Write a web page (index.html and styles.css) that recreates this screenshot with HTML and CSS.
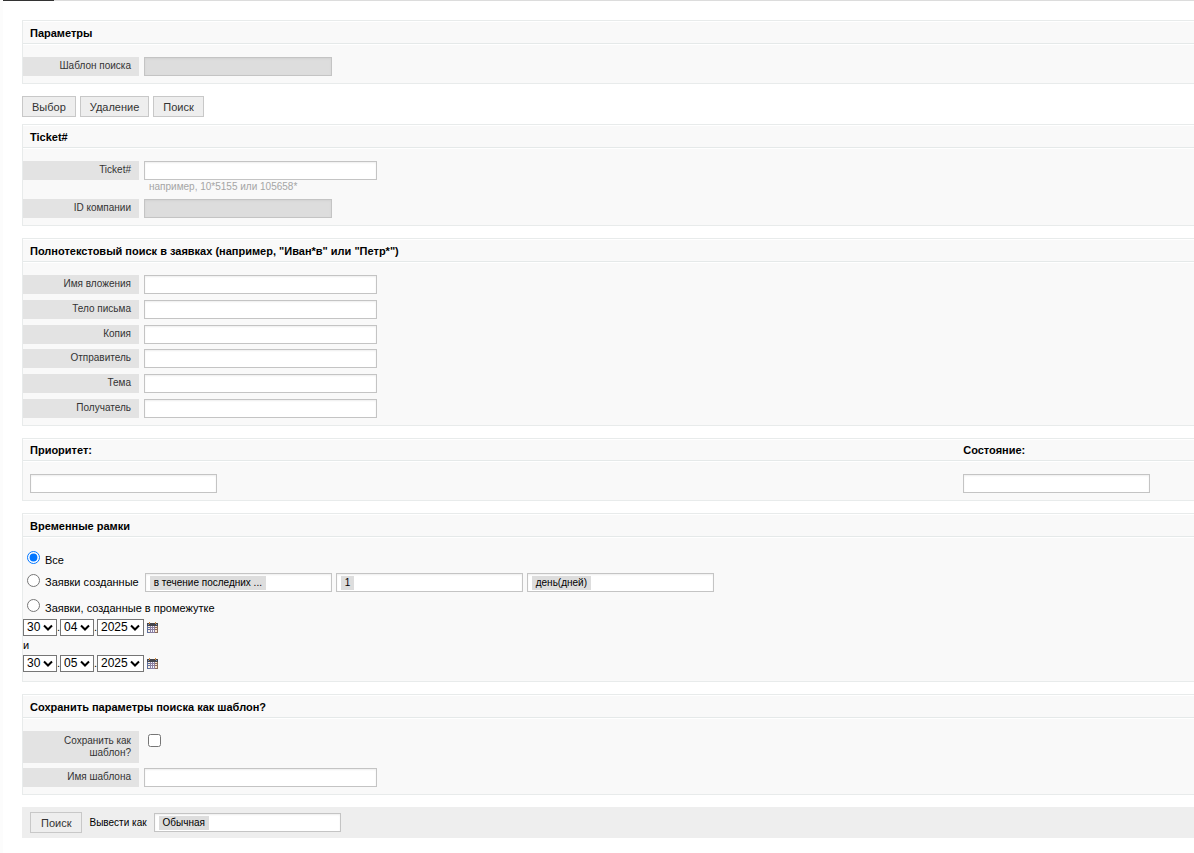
FILE: index.html
```html
<!DOCTYPE html>
<html lang="ru">
<head>
<meta charset="utf-8">
<title>Поиск</title>
<link rel="stylesheet" href="styles.css">
</head>
<body>
<svg class="defs" aria-hidden="true">
  <symbol id="calendar" viewBox="0 0 11 11">
    <rect x="0" y="1" width="11" height="10" fill="#5f6f9c"/>
    <rect x="3" y="4" width="5" height="7" fill="#8c80a0"/>
    <rect x="8" y="4" width="3" height="7" fill="#8a6a58"/>
    <rect x="0" y="1" width="11" height="3" fill="#45454c"/>
    <path d="M2 0h1v2h-1zM8 0h1v2h-1z" fill="#d08a40"/>
    <path d="M1 2h1v1h-1zM9 2h1v1h-1z" fill="#7898c8"/>
    <path d="M1 4h2v1h-2zM1 6h2v1h-2zM1 8h2v2h-2z" fill="#fbf1e2"/>
    <path d="M4 4h1v1h-1zM6 4h1v1h-1zM4 6h1v1h-1zM6 6h1v1h-1zM4 8h1v2h-1zM6 8h1v2h-1z" fill="#f4f6ff"/>
    <path d="M8 4h2v1h-2zM8 6h2v1h-2zM8 8h2v2h-2z" fill="#fbe6cf"/>
  </symbol>
</svg>
<div class="tabline"><div class="tab-active"></div></div>
<form class="page">
  <section class="panel">
    <h2>Параметры</h2>
    <div class="rows">
      <label for="profile">Шаблон поиска</label>
      <input id="profile" class="field short" type="text" disabled>
    </div>
  </section>

  <div class="actions">
    <button type="button">Выбор</button>
    <button type="button">Удаление</button>
    <button type="button">Поиск</button>
  </div>

  <section class="panel">
    <h2>Ticket#</h2>
    <div class="rows">
      <label for="ticket">Ticket#</label>
      <div class="cell">
        <input id="ticket" class="field" type="text">
        <p class="hint">например, 10*5155 или 105658*</p>
      </div>
      <label for="company">ID компании</label>
      <input id="company" class="field short" type="text" disabled>
    </div>
  </section>

  <section class="panel">
    <h2>Полнотекстовый поиск в заявках (например, "Иван*в" или "Петр*")</h2>
    <div class="rows spread">
      <label for="attachment">Имя вложения</label>
      <input id="attachment" class="field" type="text">
      <label for="body">Тело письма</label>
      <input id="body" class="field" type="text">
      <label for="cc">Копия</label>
      <input id="cc" class="field" type="text">
      <label for="from">Отправитель</label>
      <input id="from" class="field" type="text">
      <label for="subject">Тема</label>
      <input id="subject" class="field" type="text">
      <label for="to">Получатель</label>
      <input id="to" class="field" type="text">
    </div>
  </section>

  <section class="panel">
    <div class="head columns">
      <h2><label for="priority">Приоритет:</label></h2>
      <h2><label for="state">Состояние:</label></h2>
    </div>
    <div class="body columns">
      <input id="priority" class="field token-width" type="text">
      <input id="state" class="field token-width" type="text">
    </div>
  </section>

  <section class="panel">
    <h2>Временные рамки</h2>
    <div class="times">
      <div class="choice">
        <input id="all" type="radio" name="time" checked>
        <label for="all">Все</label>
      </div>
      <div class="choice with-fields">
        <input id="created" type="radio" name="time">
        <label for="created">Заявки созданные</label>
        <div class="tokens">
          <div class="token-field"><span class="token">в течение последних ...</span><input type="text" aria-label="Период"></div>
          <div class="token-field"><span class="token">1</span><input type="text" aria-label="Количество"></div>
          <div class="token-field"><span class="token">день(дней)</span><input type="text" aria-label="Единица"></div>
        </div>
      </div>
      <div class="choice">
        <input id="between" type="radio" name="time">
        <label for="between">Заявки, созданные в промежутке</label>
      </div>
      <div class="date">
        <select class="day" aria-label="День начала"><option>30</option></select><span>.</span>
        <select class="day" aria-label="Месяц начала"><option>04</option></select><span>.</span>
        <select class="year" aria-label="Год начала"><option>2025</option></select>
        <a href="#" aria-label="Календарь"><svg class="calendar"><use href="#calendar"/></svg></a>
      </div>
      <div class="and">и</div>
      <div class="date">
        <select class="day" aria-label="День конца"><option>30</option></select><span>.</span>
        <select class="day" aria-label="Месяц конца"><option>05</option></select><span>.</span>
        <select class="year" aria-label="Год конца"><option>2025</option></select>
        <a href="#" aria-label="Календарь"><svg class="calendar"><use href="#calendar"/></svg></a>
      </div>
    </div>
  </section>

  <section class="panel">
    <h2>Сохранить параметры поиска как шаблон?</h2>
    <div class="rows">
      <label class="tall" for="save">Сохранить как шаблон?</label>
      <input id="save" class="check" type="checkbox">
      <label for="name">Имя шаблона</label>
      <input id="name" class="field" type="text">
    </div>
  </section>

  <div class="footer">
    <button type="button">Поиск</button>
    <label for="output">Вывести как</label>
    <div class="token-field"><span class="token">Обычная</span><input id="output" type="text"></div>
  </div>
</form>
</body>
</html>
```

FILE: styles.css
```css
* { box-sizing: border-box; }

body {
  margin: 0;
  min-height: 100vh;
  border-left: 3px solid #fcfcfc;
  background: #fff;
  color: #000;
  font: 11px/14px "Liberation Sans", Arial, sans-serif;
}

input, select, button { margin: 0; font-family: inherit; }

.defs { display: none; }

.tabline { height: 1px; background: #dcdcdc; }
.tab-active { width: 51px; height: 1px; background: #333; }

.page { padding: 19px 0 15px 19px; }

.panel {
  margin-bottom: 12px;
  border: 1px solid #e8ebeb;
  border-right: 0;
  background: #f9f9f9;
  box-shadow: inset 0 1px 0 #fff;
}

h2 { margin: 0; font-size: 11px; line-height: 14px; }

.panel > h2, .head {
  padding: 5px 7px 3px;
  border-bottom: 1px solid #e5e9e9;
}

.panel > .head { padding-top: 4px; }

.rows, .body, .times { border-top: 1px solid #fff; }

.rows {
  display: grid;
  grid-template-columns: 116px 1fr;
  column-gap: 5px;
  row-gap: 5px;
  padding: 12px 0 7px;
}

.rows.spread {
  min-height: 163px;
  row-gap: 0;
  align-content: space-between;
}

.rows > label {
  min-height: 19px;
  align-self: start;
  padding: 3px 8px 4px;
  background: #e3e3e3;
  color: #333;
  font-size: 10px;
  line-height: 12px;
  text-align: right;
}

.rows > .tall { padding: 4px 8px; }

.field, .token-field {
  display: block;
  height: 19px;
  border: 1px solid #c4c4c4;
  background: #fff;
  box-shadow: inset 0 1px 2px #eee;
}

.field { width: 233px; padding: 0 4px; font-size: 11px; }
.field.short { width: 188px; }
.field.token-width { width: 187px; }
.field:disabled { background: #ddd; box-shadow: inset 0 1px 2px #d2d2d2; }

.hint {
  margin: 0 0 1px;
  padding: 1px 0 0 5px;
  color: #a5a5a5;
  font-size: 10px;
  line-height: 12px;
}

.check { width: 13px; height: 13px; margin: 3px 0 0 4px; }

.columns { display: grid; grid-template-columns: 4fr 1fr; column-gap: 38px; }
.body { padding: 12px 7px 7px; }

.actions { display: flex; gap: 4px; margin-bottom: 7px; }

button {
  height: 21px;
  padding: 0 9px;
  border: 1px solid #c8c8c8;
  background: #eee;
  color: #333;
  font-size: 11px;
}

.times { padding: 12px 0 9px; }

.choice { display: flex; align-items: flex-start; height: 20px; }
.choice input[type="radio"] { flex: none; width: 13px; height: 13px; margin: 1px 5px 0 4px; }
.choice > label { padding-top: 3px; }
.with-fields { height: 28px; padding-top: 3px; }
.with-fields > label { padding-top: 2px; }

.tokens { display: flex; gap: 4px; margin-left: 6px; }

.token-field { display: flex; align-items: center; width: 187px; padding: 0 4px; }
.token-field input { flex: 1; min-width: 0; height: 14px; padding: 0; border: 0; outline: 0; background: none; }

.token {
  padding: 1px 4px;
  background: #ddd;
  font-size: 10px;
  line-height: 12px;
  white-space: nowrap;
}

.date { display: flex; height: 18px; align-items: center; }
.date span { width: 3px; }
.date select {
  appearance: none;
  height: 17px;
  padding: 0 0 0 3px;
  border: 1px solid #767676;
  border-radius: 0;
  background: #fff url("data:image/svg+xml,%3Csvg xmlns='http://www.w3.org/2000/svg' width='10' height='7'%3E%3Cpath d='M1 1.5 5 5.5 9 1.5' fill='none' stroke='%23000' stroke-width='2'/%3E%3C/svg%3E") no-repeat right 3px center;
  color: #000;
  font-size: 12px;
}
.date .day { width: 34px; }
.date .year { width: 47px; }
.date a { display: block; margin-left: 3px; }
.calendar { display: block; width: 11px; height: 11px; }

.and { height: 18px; line-height: 18px; }

.footer {
  display: flex;
  align-items: center;
  gap: 7px;
  padding: 5px 8px;
  background: #eee;
  font-size: 10px;
}
.footer button { padding: 0 10px; }
```
